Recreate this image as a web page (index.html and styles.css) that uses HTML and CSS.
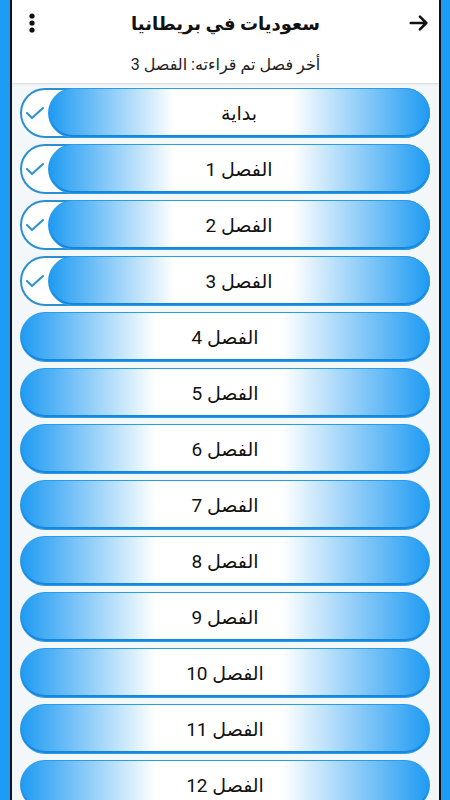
FILE: index.html
```
<!DOCTYPE html>
<html dir="rtl" lang="ar">
	<head>
		<meta charset="utf-8">
		<title>سعوديات في بريطانيا</title>
		<link rel="stylesheet" href="styles.css">
	</head>
	<body>
		<div class="frame">
			<div class="header">
				<div class="toolbar">
					<span class="icon">
						<svg width="22" height="22" viewBox="0 0 24 24"><path d="M3 12h17M13 5l7 7-7 7" fill="none" stroke="#111" stroke-width="2.8" stroke-linecap="round" stroke-linejoin="round"/></svg>
					</span>
					<h1 class="title">سعوديات في بريطانيا</h1>
					<span class="icon">
						<svg width="20" height="22" viewBox="0 0 20 22"><circle cx="10" cy="4" r="2.6" fill="#111"/><circle cx="10" cy="11" r="2.6" fill="#111"/><circle cx="10" cy="18" r="2.6" fill="#111"/></svg>
					</span>
				</div>
				<p class="lastRead">أخر فصل تم قراءته: الفصل 3</p>
			</div>
			<div class="chapters">
				<div class="item read">
					<svg class="check" width="22" height="16" viewBox="0 0 22 16"><path d="M3 8l5 5L19 3" fill="none" stroke="#2b8fd6" stroke-width="2" stroke-linecap="round" stroke-linejoin="round"/></svg>
					<div class="bar">بداية</div>
				</div>
				<div class="item read">
					<svg class="check" width="22" height="16" viewBox="0 0 22 16"><path d="M3 8l5 5L19 3" fill="none" stroke="#2b8fd6" stroke-width="2" stroke-linecap="round" stroke-linejoin="round"/></svg>
					<div class="bar">الفصل 1</div>
				</div>
				<div class="item read">
					<svg class="check" width="22" height="16" viewBox="0 0 22 16"><path d="M3 8l5 5L19 3" fill="none" stroke="#2b8fd6" stroke-width="2" stroke-linecap="round" stroke-linejoin="round"/></svg>
					<div class="bar">الفصل 2</div>
				</div>
				<div class="item read">
					<svg class="check" width="22" height="16" viewBox="0 0 22 16"><path d="M3 8l5 5L19 3" fill="none" stroke="#2b8fd6" stroke-width="2" stroke-linecap="round" stroke-linejoin="round"/></svg>
					<div class="bar">الفصل 3</div>
				</div>
				<div class="item"><div class="bar">الفصل 4</div></div>
				<div class="item"><div class="bar">الفصل 5</div></div>
				<div class="item"><div class="bar">الفصل 6</div></div>
				<div class="item"><div class="bar">الفصل 7</div></div>
				<div class="item"><div class="bar">الفصل 8</div></div>
				<div class="item"><div class="bar">الفصل 9</div></div>
				<div class="item"><div class="bar">الفصل 10</div></div>
				<div class="item"><div class="bar">الفصل 11</div></div>
				<div class="item"><div class="bar">الفصل 12</div></div>
			</div>
		</div>
	</body>
</html>
```

FILE: styles.css
```
:root {
	--frame: #1c9cf4;
	--pill: #1f9bf2;
	--pillEdge: #1686dc;
	--ring: #2b8fd6;
	--listBg: #f3f7fa;
}
* {box-sizing: border-box;}
html, body {margin: 0; height: 100%;}
body {
	background: var(--frame);
	font-family: Roboto, "DejaVu Sans", sans-serif;
	color: #111;
	overflow: hidden;
}
.frame {
	margin: 0 9px 0 10px;
	height: 800px;
	border-left: 2px solid #111;
	border-right: 2px solid #111;
	background: var(--listBg);
	overflow: hidden;
}
.header {
	background: #fff;
	box-shadow: 0 1px 2px rgba(0,0,0,.12);
	position: relative;
}
.toolbar {
	height: 46px;
	display: flex;
	align-items: center;
	justify-content: space-between;
	padding: 0 9px;
}
.icon {width: 22px; display: flex; justify-content: center;}
.title {
	margin: 0;
	font-size: 18px;
	font-weight: bold;
}
.lastRead {
	margin: 0;
	height: 37px;
	line-height: 38px;
	text-align: center;
	font-size: 16px;
	color: #222;
}
.chapters {
	display: flex;
	flex-direction: column;
	gap: 6px;
	padding: 5px 9px 0 8px;
}
.item {
	height: 50px;
	border-radius: 25px;
	display: flex;
	position: relative;
	flex: none;
}
.item.read {
	border: 2px solid var(--ring);
	padding-left: 26px;
	background: #fff;
}
.check {position: absolute; left: 2px; top: 15px;}
.bar {
	flex: 1;
	border-radius: 25px;
	background: linear-gradient(to right, var(--pill) 0%, #fff 33%, #fff 64%, var(--pill) 100%);
	border: 1px solid #2a9ce8;
	box-shadow: inset 0 -2px 0 var(--pillEdge);
	display: flex;
	align-items: center;
	justify-content: center;
	font-size: 19px;
}
.read .bar {margin: -2px -2px -2px 0;}
```
